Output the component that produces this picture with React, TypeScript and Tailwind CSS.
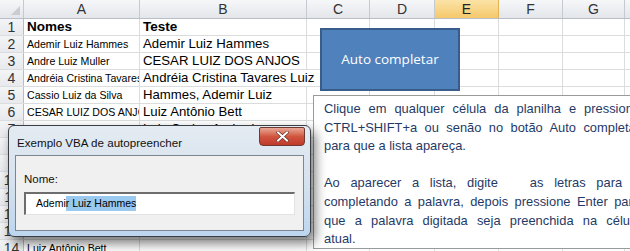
import React from 'react';

const cols = [
  { key: 'A', w: 'w-[116px]' },
  { key: 'B', w: 'w-[167px]' },
  { key: 'C', w: 'w-[63px]' },
  { key: 'D', w: 'w-[65px]' },
  { key: 'E', w: 'w-[64px]' },
  { key: 'F', w: 'w-[64px]' },
  { key: 'G', w: 'w-[62px]' },
  { key: 'H', w: 'w-[40px]' },
];

const rows: [string, string][] = [
  ['Nomes', 'Teste'],
  ['Ademir Luiz Hammes', 'Ademir Luiz Hammes'],
  ['Andre Luiz Muller', 'CESAR LUIZ DOS ANJOS'],
  ['Andréia Cristina Tavares Luiz', 'Andréia Cristina Tavares Luiz'],
  ['Cassio Luiz da Silva', 'Hammes, Ademir Luiz'],
  ['CESAR LUIZ DOS ANJOS', 'Luiz Antônio Bett'],
  ['Hammes, Ademir Luiz', 'Luiz Carlos Andrade'],
  ['Luiz Antônio Bett', ''],
  ['Luiz Carlos Andrade', ''],
  ['Marcos Paulo', ''],
  ['Paulo Roberto', ''],
  ['Roberto Carlos', ''],
  ['Sergio Luiz', ''],
  ['Luiz Antônio Bett', ''],
];

// Column header strip
const HeaderRow = () => (
  <div className="flex h-[19px] bg-gradient-to-b from-[#f6f7f9] to-[#e3e6ea] border-b border-[#b9bec6]">
    <div className="w-[24px] shrink-0 border-r border-[#c5cad1] relative">
      <div className="absolute right-[3px] bottom-[3px] w-0 h-0 border-l-[9px] border-l-transparent border-b-[9px] border-b-[#c9ccd1]" />
    </div>
    {cols.map((c) => (
      <div
        key={c.key}
        className={`${c.w} shrink-0 flex items-center justify-center border-r text-[14px] leading-none ${
          c.key === 'E'
            ? 'bg-gradient-to-b from-[#fbe3a6] to-[#f5c86a] border-[#e2b257] text-[#222]'
            : 'border-[#c5cad1] text-[#333]'
        }`}
      >
        {c.key}
      </div>
    ))}
  </div>
);

const SheetRow = ({ n, a, b }: { n: number; a: string; b: string }) => {
  const bold = n === 1;
  return (
    <div className="flex h-[17px] border-b border-[#dadcdd]">
      <div className="w-[24px] shrink-0 flex items-center justify-center bg-gradient-to-b from-[#f3f4f6] to-[#e7e9ec] border-r border-[#b9bec6] text-[14px] leading-none text-[#333]">
        {n}
      </div>
      <div
        className={`w-[116px] shrink-0 overflow-hidden whitespace-nowrap border-r border-[#dadcdd] pl-[3px] flex items-center ${
          bold ? 'font-bold text-[13.5px]' : 'text-[10.6px]'
        } text-black leading-none`}
      >
        {a}
      </div>
      <div
        className={`w-[167px] shrink-0 whitespace-nowrap pl-[3px] flex items-center relative z-10 ${
          b && n === 4 ? '' : 'border-r border-[#dadcdd]'
        } ${bold ? 'font-bold text-[13.5px]' : 'text-[13.2px]'} text-black leading-none`}
      >
        {b}
      </div>
      {cols.slice(2).map((c) => (
        <div key={c.key} className={`${c.w} shrink-0 border-r border-[#dadcdd]`} />
      ))}
    </div>
  );
};

export default function App() {
  return (
    <div className="relative w-[630px] h-[251px] overflow-hidden bg-white font-['Liberation_Sans',Arial,sans-serif]">
      <HeaderRow />
      {rows.map((r, i) => (
        <SheetRow key={i} n={i + 1} a={r[0]} b={r[1]} />
      ))}

      {/* Shape: Auto completar */}
      <div className="absolute left-[320px] top-[28px] w-[140px] h-[63px] bg-[#4f81bd] border-2 border-[#385d8a] flex items-center justify-center text-white text-[13.5px] font-['Open_Sans',sans-serif] z-20">
        Auto completar
      </div>

      {/* Text box */}
      <div className="absolute left-[313px] top-[95px] w-[336px] h-[154px] bg-white border border-[#9a9a9a] z-20 pl-[10px] pr-[8px] pt-[4px] text-[12.9px] leading-[18.6px] text-[#1f3a66]">
        <div className="text-justify [text-align-last:justify]">Clique em qualquer célula da planilha e pressione</div>
        <div className="text-justify [text-align-last:justify]">CTRL+SHIFT+a ou senão no botão Auto completar</div>
        <div>para que a lista apareça.</div>
        <div className="h-[18.6px]" />
        <div className="text-justify [text-align-last:justify] whitespace-pre">Ao aparecer a lista, digite   as letras para ir</div>
        <div className="text-justify [text-align-last:justify]">completando a palavra, depois pressione Enter para</div>
        <div className="text-justify [text-align-last:justify]">que a palavra digitada seja preenchida na célula</div>
        <div>atual.</div>
      </div>

      {/* Dialog */}
      <div className="absolute left-[8px] top-[125px] w-[303px] h-[112px] rounded-[6px] border border-[#3a3f45] bg-gradient-to-b from-[#e4ebf2] via-[#d6e2ee] to-[#bcd6ef] shadow-[4px_6px_12px_rgba(0,0,0,0.55)] z-30">
        <div className="flex items-start h-[29px] pl-[8px] relative">
          <span className="mt-[11px] text-[11.6px] leading-none text-[#111]">Exemplo VBA de autopreencher</span>
          <div className="absolute right-[5px] top-[1px] w-[46px] h-[19px] rounded-b-[4px] rounded-t-[2px] border border-[#6e3a32] bg-gradient-to-b from-[#e9a898] via-[#d0553f] to-[#c0392b] flex items-center justify-center">
            <svg width="13" height="11" viewBox="0 0 13 11">
              <path d="M2 1.5 L11 9.5 M11 1.5 L2 9.5" stroke="#5a2a22" strokeWidth="3.2" strokeLinecap="square" />
              <path d="M2 1.5 L11 9.5 M11 1.5 L2 9.5" stroke="#fff" strokeWidth="2" strokeLinecap="square" />
            </svg>
          </div>
        </div>
        <div className="mx-[6px] h-[76px] bg-[#f0f0f0] border border-[#7d8590] px-[8px] pt-[18px]">
          <div className="text-[11.5px] leading-none text-[#111]">Nome:</div>
          <div className="mt-[6px] w-[271px] h-[23px] bg-white border-t-2 border-l-2 border-[#6d6d6d] border-r border-b border-r-[#e3e3e3] border-b-[#e3e3e3] flex items-center pl-[10px] text-[10.5px] text-black">
            <span>Ademi</span>
            <span className="bg-[#99c9ef]">r Luiz Hammes</span>
          </div>
        </div>
      </div>
    </div>
  );
}
